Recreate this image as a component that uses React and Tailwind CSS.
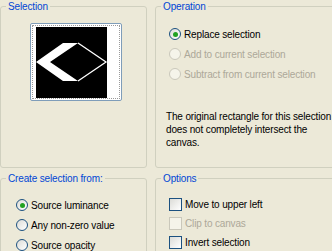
import React from 'react';

const Radio = ({ checked, disabled, label }) => (
  <div className="flex items-center gap-[3px] h-[20px]">
    <span
      className={`w-[12px] h-[12px] rounded-full border flex items-center justify-center ${
        disabled
          ? 'border-[#cac8bb] bg-[#f5f4ea]'
          : 'border-[#1c5180] bg-linear-to-br from-[#dcdcd7] to-white'
      }`}
    >
      {checked && <span className="w-[5px] h-[5px] rounded-full bg-[#21a121]" />}
    </span>
    <span className={disabled ? 'text-[#aca899]' : 'text-black'}>{label}</span>
  </div>
);

const Check = ({ disabled, label }) => (
  <div className="flex items-center gap-[3px] h-[19px]">
    <span
      className={`w-[13px] h-[13px] border ${
        disabled
          ? 'border-[#cac8bb] bg-[#f5f4ea]'
          : 'border-[#1c5180] bg-linear-to-br from-[#dcdcd7] to-white'
      }`}
    />
    <span className={disabled ? 'text-[#aca899]' : 'text-black'}>{label}</span>
  </div>
);

const Group = ({ title, className, children }) => (
  <fieldset className={`min-w-0 border border-[#d0d0bf] rounded-[3px] ${className}`}>
    <legend className="ml-[5px] px-[2px] leading-[13px] text-[#0046d5]">{title}</legend>
    {children}
  </fieldset>
);

export default function App() {
  return (
    <div className="w-[332px] h-[251px] overflow-hidden bg-[#ece9d8] font-['Liberation_Sans',Arial,sans-serif] text-[10px] tracking-[-0.15px]">
      <div className="w-[350px] grid grid-cols-[147px_1fr] gap-x-[8px] gap-y-[4px]">
        <Group title="Selection" className="h-[168px]">
          <div className="mt-[10px] ml-[29px] w-[92px] h-[78px] border border-[#7f9db9] rounded-[2px] bg-white p-[1px]">
            <div className="h-full border border-dotted border-[#9a9a9a] pl-[3px] pt-[1px]">
              <svg width="81" height="71" viewBox="0 0 81 71">
                <rect x="0" y="0" width="71" height="71" fill="#000" />
                <polygon points="0,35 27,16 42,16 14,35 42,54 27,54" fill="#fff" />
                <polyline points="42,16 70,35 42,54" fill="none" stroke="#fff" strokeWidth="1.3" />
              </svg>
            </div>
          </div>
        </Group>
        <Group title="Operation" className="h-[168px]">
          <div className="mt-[11px] pl-[13px]">
            <Radio checked label="Replace selection" />
            <Radio disabled label="Add to current selection" />
            <Radio disabled label="Subtract from current selection" />
          </div>
          <p className="mt-[26px] pl-[10px] leading-[13px] text-black">
            The original rectangle for this selection
            <br />
            does not completely intersect the
            <br />
            canvas.
          </p>
        </Group>
        <Group title="Create selection from:" className="h-[90px]">
          <div className="mt-[10px] pl-[15px]">
            <Radio checked label="Source luminance" />
            <Radio label="Any non-zero value" />
            <Radio label="Source opacity" />
          </div>
        </Group>
        <Group title="Options" className="h-[90px]">
          <div className="mt-[10px] pl-[13px]">
            <Check label="Move to upper left" />
            <Check disabled label="Clip to canvas" />
            <Check label="Invert selection" />
          </div>
        </Group>
      </div>
    </div>
  );
}
